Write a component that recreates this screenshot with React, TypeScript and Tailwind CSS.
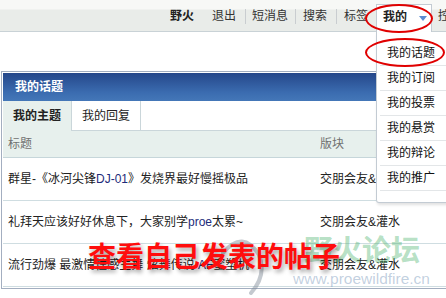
import React from "react";

const Latin: React.FC<{ children: React.ReactNode }> = ({ children }) => (
  <span className="text-[#1d2b7a]">{children}</span>
);

const topics = [
  {
    title: (
      <>
        群星-《冰河尖锋<Latin>DJ-01</Latin>》发烧界最好慢摇极品
      </>
    ),
    forum: "交朋会友&灌水",
  },
  {
    title: (
      <>
        礼拜天应该好好休息下，大家别学<Latin>proe</Latin>太累~
      </>
    ),
    forum: "交朋会友&灌水",
  },
  {
    title: (
      <>
        流行劲爆 最激情性感主舞 炫舞传说 <Latin>AF</Latin>蜜塑机
      </>
    ),
    forum: "交朋会友&灌水",
  },
];

const menuItems = ["我的话题", "我的订阅", "我的投票", "我的悬赏", "我的辩论", "我的推广"];

const Sep = () => <div className="h-[15px] w-px bg-[#c9cdd0]" />;

export default function App() {
  return (
    <div className="relative h-[298px] w-[446px] overflow-hidden bg-white font-['Liberation_Sans','Noto_Sans_CJK_SC',sans-serif] text-[12px] leading-none text-[#222]">
      {/* top nav */}
      <div className="relative z-20 flex h-[32px] items-start whitespace-nowrap border-b border-[#c9d2d6] bg-[linear-gradient(to_bottom,#f7f8f6_0px,#f7f8f6_9px,#e9ece9_10px)] pl-[170px]">
        <span className="mt-[10px] font-bold">野火</span>
        <span className="ml-[18px] mt-[10px] text-[#333]">退出</span>
        <div className="ml-[9px] mt-[9px]">
          <Sep />
        </div>
        <span className="ml-[6px] mt-[10px] text-[#333]">短消息</span>
        <div className="ml-[7px] mt-[9px]">
          <Sep />
        </div>
        <span className="ml-[7px] mt-[10px] text-[#333]">搜索</span>
        <div className="ml-[9px] mt-[9px]">
          <Sep />
        </div>
        <span className="ml-[7px] mt-[10px] text-[#333]">标签</span>

        <div className="relative ml-[8px] mt-[4px] flex h-[28px] items-start border-x border-t border-[#c3cbd3] bg-white pl-[6px] pr-[4px]">
          <span className="mt-[6px] font-bold">我的</span>
          <svg className="ml-[12px] mt-[11px]" width="8" height="5" viewBox="0 0 8 5">
            <path d="M0 0 L8 0 L4 5 Z" fill="#5b8cd2" />
          </svg>

          {/* dropdown */}
          <div className="absolute left-[-1px] top-full w-[90px] rounded-bl-[3px] border-x border-b border-[#c3cbd3] bg-white pb-[11px] pt-[9px] shadow-[1px_2px_3px_rgba(0,0,0,0.12)]">
            {menuItems.map((item) => (
              <div key={item} className="ml-[3px] flex h-[25px] items-center border-b border-[#e3e6e8] pl-[7px] text-[#111]">
                {item}
              </div>
            ))}
          </div>
        </div>
        <span className="ml-[6px] mt-[10px] text-[#333]">控制面板</span>
      </div>

      {/* panel */}
      <div className="ml-[1px] mt-[39px] w-[470px] border border-[#a3aec0] p-px">
        <div className="flex h-[28px] items-center bg-[linear-gradient(to_bottom,#25478a,#3b6cb0_70%,#4477b8)] pl-[12px] font-bold text-white">
          我的话题
        </div>

        <div className="flex h-[30px]">
          <div className="flex items-center bg-[#e7f0ed] px-[10px] font-bold">我的主题</div>
          <div className="flex items-center border-b border-l border-r border-[#cad6da] px-[10px]">我的回复</div>
          <div className="flex-1 border-b border-[#cad6da]" />
        </div>

        <div className="grid h-[27px] grid-cols-[312px_1fr] items-center border-b border-[#c6d6da] bg-[#e7f0ed] pl-[5px] text-[#707070]">
          <span>标题</span>
          <span>版块</span>
        </div>

        {topics.map((t, i) => (
          <div key={i} className="grid h-[43px] grid-cols-[312px_1fr] items-center border-b border-[#cfdde1] pl-[5px]">
            <span className="whitespace-nowrap">{t.title}</span>
            <span className="whitespace-nowrap">{t.forum}</span>
          </div>
        ))}
      </div>

      {/* watermark */}
      <svg className="absolute left-[221px] top-[233px] z-10" width="46" height="62" viewBox="0 0 46 62">
        <path d="M2 20 Q22 -4 38 22 Q46 42 30 60" fill="none" stroke="#7d8894" strokeWidth="4" strokeLinecap="round" opacity="0.45" />
      </svg>
      <div className="absolute left-[304px] top-[234px] z-10 whitespace-nowrap font-['Noto_Sans_CJK_SC',sans-serif] text-[29px] font-bold leading-none text-[rgba(70,175,105,0.4)]">
        野火论坛
      </div>
      <div className="absolute left-[293px] top-[271px] z-10 whitespace-nowrap text-[15.5px] leading-none text-[rgba(120,150,185,0.45)]">
        www.proewildfire.cn
      </div>
      <div className="absolute left-[88px] top-[241px] z-10 whitespace-nowrap font-['Noto_Sans_CJK_SC',sans-serif] text-[28px] font-bold leading-none text-[#ff0d0d] [text-shadow:2px_3px_4px_rgba(0,0,0,0.35)]">
        查看自己发表的帖子
      </div>

      {/* red marks */}
      <div className="absolute left-[365px] top-[4px] z-30 h-[29px] w-[68px] rounded-[50%] border-2 border-[#e00000]" />
      <div className="absolute left-[365px] top-[38px] z-30 h-[29px] w-[80px] rounded-[50%] border-2 border-[#e00000]" />
    </div>
  );
}
